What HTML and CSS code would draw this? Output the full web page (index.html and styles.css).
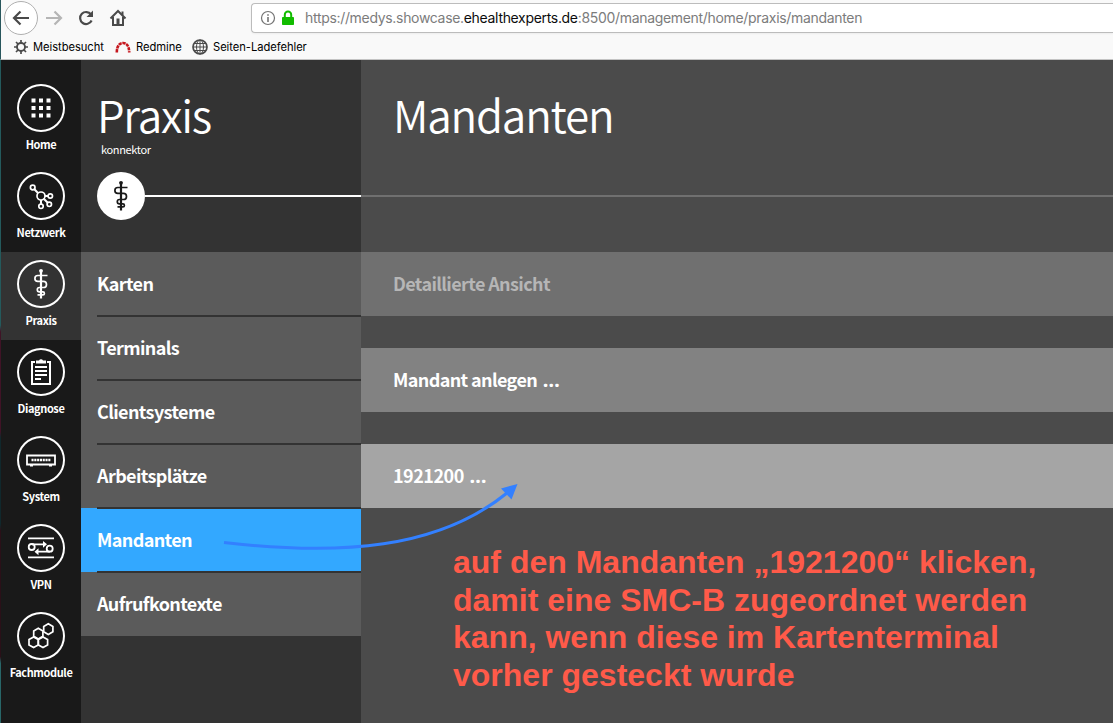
FILE: index.html
```html
<!DOCTYPE html>
<html lang="de">
<head>
<meta charset="utf-8">
<title>Mandanten</title>
<link rel="stylesheet" href="styles.css">
</head>
<body>
<svg class="defs" width="0" height="0">
  <symbol id="staff" viewBox="0 0 48 48">
    <g fill="none" stroke="currentColor" stroke-width="1.700">
      <path d="M24 10v28.500" stroke-width="2.200"/>
      <path d="M30.500 15.500H20.800a2.900 2.900 0 0 0 0 5.800h5.600a3.100 3.100 0 0 1 0 6.200h-3.900a2.200 2.200 0 0 0 0 4.400h3.400a1.500 1.500 0 0 1 0 3H20.500"/>
    </g>
    <circle cx="24" cy="10.800" r="1.900" fill="currentColor"/>
  </symbol>
</svg>
<div class="browser">
  <div class="toolbar">
    <span class="back"><svg width="18" height="18" viewBox="0 0 18 18"><path d="M17 9H2M8.500 2.500L2 9l6.500 6.500" fill="none" stroke="#4a4a4a" stroke-width="2.200"/></svg></span>
    <svg class="forward" width="18" height="18" viewBox="0 0 18 18"><path d="M1 9h14.500M9.500 2.500L16 9l-6.500 6.500" fill="none" stroke="#b5b5b5" stroke-width="2.200"/></svg>
    <svg class="reload" width="18" height="18" viewBox="0 0 18 18"><path d="M14 5.500A6 6 0 1 0 14.600 11.500" fill="none" stroke="#4a4a4a" stroke-width="2.200"/><path d="M16 1.500v6.500H9.500z" fill="#4a4a4a"/></svg>
    <svg class="home" width="18" height="18" viewBox="0 0 18 18"><path d="M1.500 9.500L9 2l7.500 7.500M4 8v8h10V8" fill="none" stroke="#4a4a4a" stroke-width="2"/><path d="M7.500 9.500h3V16h-3zM12.500 2.500h2V6h-2z" fill="#4a4a4a"/></svg>
    <div class="address">
      <svg width="16" height="16" viewBox="0 0 16 16"><circle cx="8" cy="8" r="6.500" fill="none" stroke="#737373" stroke-width="1.200"/><path d="M8 7v5M8 4.200v1.600" stroke="#737373" stroke-width="1.600"/></svg>
      <svg class="lock" width="14" height="16" viewBox="0 0 14 16"><rect x="1" y="7" width="12" height="8" rx=".8" fill="#12bc00"/><path d="M3.800 8V4.700a3.200 3.200 0 0 1 6.400 0V8" fill="none" stroke="#12bc00" stroke-width="2"/></svg>
      <span class="url">https://medys.showcase.<b>ehealthexperts.de</b>:8500/management/home/praxis/mandanten</span>
    </div>
  </div>
  <div class="bookmarks">
    <svg width="14" height="14" viewBox="0 0 14 14"><g stroke="#4a4a4a" fill="none"><circle cx="7" cy="7" r="4" stroke-width="1.900"/><path d="M7 0v3M7 11v3M0 7h3M11 7h3M2 2l2 2M10 10l2 2M12 2l-2 2M4 10l-2 2" stroke-width="1.700"/></g></svg>
    <span class="bm1">Meistbesucht</span>
    <svg width="16" height="12" viewBox="0 0 16 12"><path d="M1.800 11.500C1.800 5 4.500 2 8 2s6.200 3 6.200 9.500" fill="none" stroke="#c6171e" stroke-width="2.600" stroke-dasharray="3.300 .7"/></svg>
    <span class="bm2">Redmine</span>
    <svg width="16" height="16" viewBox="0 0 16 16"><g fill="none" stroke="#4a4a4a"><circle cx="8" cy="8" r="7" stroke-width="1.700"/><ellipse cx="8" cy="8" rx="3.500" ry="7"/><path d="M8 1v14M1 8h14M2 4.500h12M2 11.500h12"/></g></svg>
    <span class="bm3">Seiten-Ladefehler</span>
  </div>
</div>
<div class="app">
  <nav class="rail">
    <a class="rail-item"><svg class="ring" viewBox="0 0 48 48"><path d="M14.500 14.500h4v4h-4zM22 14.500h4v4h-4zM29.500 14.500h4v4h-4zM14.500 22h4v4h-4zM22 22h4v4h-4zM29.500 22h4v4h-4zM14.500 29.500h4v4h-4zM22 29.500h4v4h-4zM29.500 29.500h4v4h-4z" fill="#fff"/></svg><span>Home</span></a>
    <a class="rail-item"><svg class="ring" viewBox="0 0 48 48"><g fill="none" stroke="#fff" stroke-width="1.700"><circle cx="24" cy="24" r="4"/><circle cx="15.700" cy="15.500" r="2.300"/><circle cx="33.300" cy="24" r="2.200"/><circle cx="32.300" cy="32.300" r="2.200"/><circle cx="24" cy="34.300" r="2.200"/><path d="M17.400 17.200l3.800 4M28 24h3.300M27 27l4 4M24 28v4.300" stroke-width="2"/></g></svg><span>Netzwerk</span></a>
    <a class="rail-item active"><svg class="ring" viewBox="0 0 48 48"><use href="#staff"/></svg><span>Praxis</span></a>
    <a class="rail-item"><svg class="ring" viewBox="0 0 48 48"><path d="M18 14h-3v22h18V14h-3" fill="none" stroke="#fff" stroke-width="2"/><path d="M19 15.500v-3h3a2.200 2.200 0 0 1 4 0h3v3z" fill="#fff"/><path d="M18 19h12M18 23h12M18 27h12M18 31h6" stroke="#fff" stroke-width="1.800"/></svg><span>Diagnose</span></a>
    <a class="rail-item"><svg class="ring" viewBox="0 0 48 48"><path d="M10 19.500h28v9H10z" fill="none" stroke="#fff" stroke-width="1.800"/><path d="M14.500 24h19" stroke="#fff" stroke-width="2.400" stroke-dasharray="2.100 .7"/><path d="M13 29h3v1.500h-3zM32 29h3v1.500h-3z" fill="#fff"/></svg><span>System</span></a>
    <a class="rail-item"><svg class="ring" viewBox="0 0 48 48"><g fill="none" stroke="#fff" stroke-width="1.800"><path d="M11 14.300h26M11 33.300h26M15 20.300h12M20 27.700h13"/><circle cx="14.700" cy="23" r="3"/><circle cx="32.700" cy="24.700" r="3"/></g><path d="M26 17l4 3.300-4 3.500zM21.500 24.200l-4 3.500 4 3.500z" fill="#fff"/></svg><span>VPN</span></a>
    <a class="rail-item"><svg class="ring" viewBox="0 0 48 48"><g fill="none" stroke="#fff" stroke-width="1.700"><path id="hex" d="M21.300 16.200l4.600 2.700v5.300l-4.600 2.700-4.600-2.700v-5.300z"/><use href="#hex" x="10" y="-4.500"/><use href="#hex" x="-4.700" y="8.700"/><use href="#hex" x="4.700" y="8.700"/></g></svg><span>Fachmodule</span></a>
  </nav>
  <aside class="section">
    <header class="section-head">
      <h1>Praxis</h1>
      <p>konnektor</p>
      <div class="section-line"><span class="badge"><svg width="48" height="48" viewBox="0 0 48 48"><use href="#staff"/></svg></span><i></i></div>
    </header>
    <ul class="menu">
      <li>Karten</li><li>Terminals</li><li>Clientsysteme</li><li>Arbeitsplätze</li><li class="selected">Mandanten</li><li>Aufrufkontexte</li>
    </ul>
  </aside>
  <main class="content">
    <header class="content-head"><h2>Mandanten</h2></header>
    <div class="row detail">Detaillierte Ansicht</div>
    <div class="row create">Mandant anlegen <span class="dots">…</span></div>
    <div class="row client">1921200 <span class="dots">…</span></div>
    <p class="note">auf den Mandanten „1921200“ klicken,<br>damit eine SMC-B zugeordnet werden<br>kann, wenn diese im Kartenterminal<br>vorher gesteckt wurde</p>
  </main>
</div>
<svg class="arrow" width="310" height="75" viewBox="0 0 310 75"><path d="M4 62.500C121 76 218 69 287 13" fill="none" stroke="#3380ff" stroke-width="3"/><path d="M297.500 4L281 8.500 291.500 19.500z" fill="#3380ff"/></svg>
</body>
</html>
```
FILE: styles.css
```css
* { box-sizing: border-box; }
body { margin: 0; width: 1113px; height: 723px; overflow: hidden; background: #4b4b4b; color: #fff; font-family: "Noto Sans CJK SC", "Noto Sans", sans-serif; position: relative; }
h1, h2, p, ul { margin: 0; padding: 0; }
.defs { position: absolute; }
.browser { height: 60px; background: #f9f9f9; border-bottom: 1px solid #c4c4c4; border-left: 1px solid #28565c; color: #000; font-family: Inter, sans-serif; overflow: hidden; }
.toolbar { height: 35px; display: flex; align-items: center; padding-left: 3px; }
.back { width: 34px; height: 34px; border: 1px solid #b0b0b0; border-radius: 50%; background: #fff; display: flex; align-items: center; justify-content: center; }
.forward { margin-left: 7px; }
.reload { margin-left: 14px; }
.home { margin-left: 14px; }
.address { margin-left: 124px; height: 30px; flex: 1; display: flex; align-items: center; background: #fff; border: 1px solid #bcbcbc; border-right: 0; border-radius: 4px 0 0 4px; padding-left: 8px; box-shadow: 0 1px 2px #0000000d; }
.lock { margin-left: 5px; }
.url { margin-left: 10px; font-size: 14px; letter-spacing: -0.32px; color: #7c7c7c; white-space: nowrap; }
.url b { font-weight: 400; color: #0c0c0d; }
.bookmarks { height: 24px; display: flex; align-items: center; font-size: 11.200px; letter-spacing: -0.050px; padding-left: 13px; }
.bm1, .bm2, .bm3 { margin-left: 5px; white-space: nowrap; }
.bm1 { width: 82px; }
.bm2 { width: 56px; }
.app { display: flex; height: 663px; }
.app::before { content: ""; width: 1px; background: linear-gradient(#245a5c 0 40%, #401326 41% 56%, #10282c 57% 70%, #2a1018 71% 90%, #286668 91%); }
.rail { width: 80px; background: #191919; padding-top: 16px; }
.rail-item { height: 88px; display: flex; flex-direction: column; align-items: center; padding-top: 8px; font-size: 11px; font-weight: 700; letter-spacing: -0.400px; line-height: 24px; }
.rail-item.active { background: #333; }
.ring { width: 48px; height: 48px; border-radius: 50%; box-shadow: inset 0 0 0 2px #fff; flex: none; color: #fff; }
.section { width: 280px; background: #333; }
.section-head { height: 192px; padding: 28px 0 0 16px; }
h1, h2 { font-weight: 350; font-size: 44px; letter-spacing: -1.200px; line-height: 52px; white-space: nowrap; }
.section-head p { font-size: 11px; line-height: 12px; letter-spacing: -0.350px; padding-left: 4px; margin-top: 3px; }
.section-line { display: flex; align-items: center; margin-top: 17px; }
.section-line i { flex: 1; height: 2px; background: #fff; }
.badge { width: 48px; height: 48px; border-radius: 50%; background: #fff; color: #191919; display: block; }
.menu { list-style: none; }
.menu li, .row { height: 64px; line-height: 62px; font-size: 18px; font-weight: 700; letter-spacing: -0.620px; }
.menu li { padding-left: 16px; background: #5b5b5b; position: relative; }
.menu li + li::before { content: ""; position: absolute; left: 16px; right: 0; top: -1px; height: 2px; background: #333; }
.menu li.selected { background: #33a8ff; }
.content { flex: 1; background: #4b4b4b; }
.content-head { height: 137px; padding: 28px 0 0 32px; border-bottom: 2px solid #707070; margin-bottom: 55px; }
.row { padding-left: 32px; margin-bottom: 32px; }
.dots { font-family: "Noto Sans", sans-serif; font-size: 20px; line-height: 1; margin-left: 2px; letter-spacing: 0; }
.detail { background: #707070; color: #b6b6b6; }
.create { background: #828282; }
.client { background: #a5a5a5; letter-spacing: -0.500px; margin-bottom: 0; }
.note { padding-left: 92px; color: #ff5a49; font: 700 32px/37.500px "Liberation Sans", sans-serif; white-space: nowrap; margin-top: 36px; }
.arrow { position: absolute; left: 220px; top: 480px; }
```
